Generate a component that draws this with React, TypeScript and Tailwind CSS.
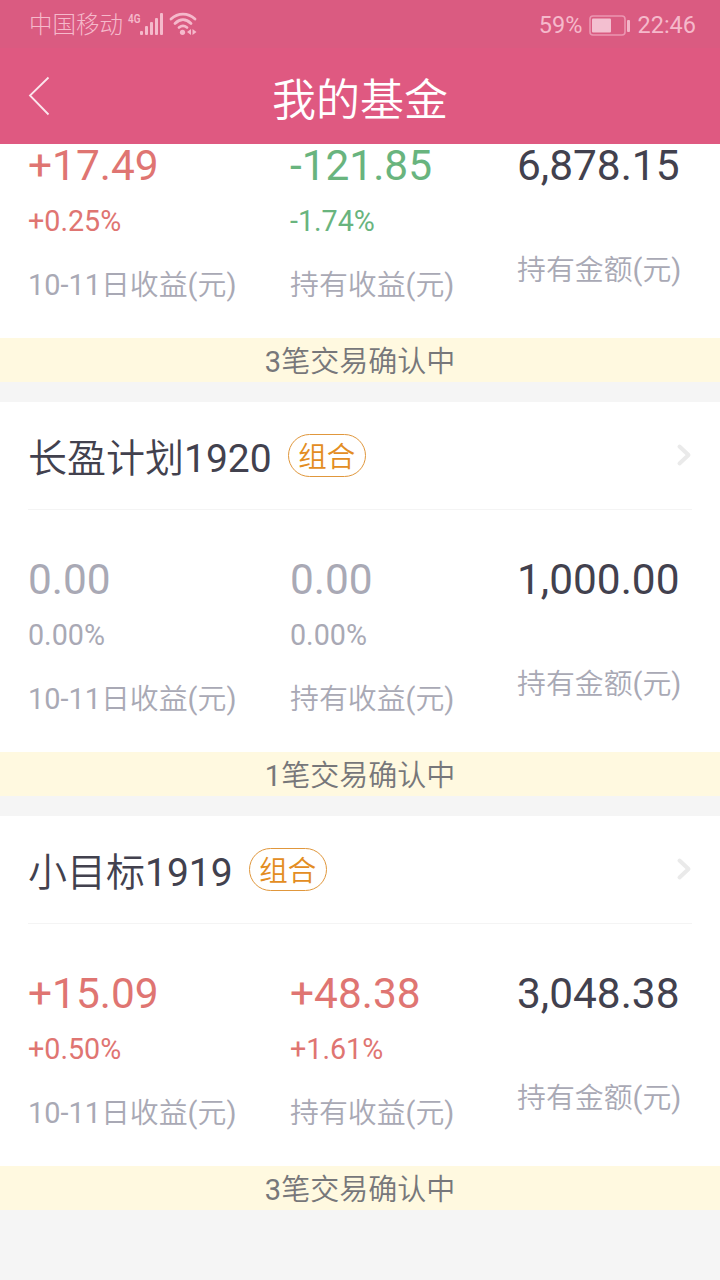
import clsx from "clsx";

type Tone = "up" | "down" | "flat";

type Metric = {
  value: string;
  percent: string;
  label: string;
  tone: Tone;
};

type Fund = {
  name?: string;
  metrics: Metric[];
  total: string;
  pending: string;
};

const toneClass: Record<Tone, string> = {
  up: "text-[#df7572]",
  down: "text-[#69b47e]",
  flat: "text-[#a9a9b5]",
};

const funds: Fund[] = [
  {
    metrics: [
      { value: "+17.49", percent: "+0.25%", label: "10-11日收益(元)", tone: "up" },
      { value: "-121.85", percent: "-1.74%", label: "持有收益(元)", tone: "down" },
    ],
    total: "6,878.15",
    pending: "3笔交易确认中",
  },
  {
    name: "长盈计划1920",
    metrics: [
      { value: "0.00", percent: "0.00%", label: "10-11日收益(元)", tone: "flat" },
      { value: "0.00", percent: "0.00%", label: "持有收益(元)", tone: "flat" },
    ],
    total: "1,000.00",
    pending: "1笔交易确认中",
  },
  {
    name: "小目标1919",
    metrics: [
      { value: "+15.09", percent: "+0.50%", label: "10-11日收益(元)", tone: "up" },
      { value: "+48.38", percent: "+1.61%", label: "持有收益(元)", tone: "up" },
    ],
    total: "3,048.38",
    pending: "3笔交易确认中",
  },
];

/** Sets Chinese characters in the demi-light weight and leaves digits regular. */
function MixedText({ text }: { text: string }) {
  return text
    .split(/([\u4e00-\u9fff]+)/)
    .filter(Boolean)
    .map((part, i) => (
      <span key={i} className={/[\u4e00-\u9fff]/.test(part) ? "font-[350]" : "font-normal"}>
        {part}
      </span>
    ));
}

function StatusBar() {
  return (
    <div className="flex h-12 items-center justify-between bg-[#da5b81] pl-[29px] pr-6 text-[23.5px] leading-none text-[#f5b9cb]">
      <div className="flex items-center">
        <span className="w-24 pt-1 font-light">中国移动</span>
        <svg width="76" height="30" viewBox="125 9 76 30" fill="currentColor">
          <text x="128" y="22.5" fontSize="13" fontWeight="600" textLength="12.5" lengthAdjust="spacingAndGlyphs">
            4G
          </text>
          <rect x="140" y="31" width="3" height="4" rx="1" />
          <rect x="145" y="26" width="3" height="9" rx="1" />
          <rect x="150" y="22" width="3" height="13" rx="1" />
          <rect x="155" y="18" width="3" height="17" rx="1" />
          <rect x="160" y="13" width="3" height="22" rx="1" />
          <g fill="none" stroke="currentColor" strokeWidth="2.8" strokeLinecap="round">
            <path d="M171 19C178 12.500 188 12.500 195 19" />
            <path d="M175 23.500C180 18.500 186 18.500 191 23.500" />
            <path d="M179 27.500C181.500 25.500 184.500 25.500 187 27.500" />
          </g>
          <circle cx="182.500" cy="32.300" r="2.600" />
          <path d="M187 32l4-3v6zM192.500 29v6l4-3z" />
        </svg>
      </div>
      <div className="flex items-center pt-[3px]">
        <span>59%</span>
        <svg className="mx-[7px]" width="41" height="22" viewBox="0 0 41 22" fill="none">
          <rect x="1" y="1" width="35" height="19" rx="3" stroke="#eb96b1" strokeWidth="1.600" />
          <rect x="3" y="3.500" width="19" height="14" rx="1" fill="#f3bfd0" />
          <rect x="38" y="5" width="3" height="12" rx="1" fill="#f3b5c8" />
        </svg>
        <span>22:46</span>
      </div>
    </div>
  );
}

function FundCard({ fund }: { fund: Fund }) {
  return (
    <section className="mb-5 bg-white">
      {fund.name && (
        <div className="mx-7 flex h-[108px] items-center border-b border-[#f4f4f4]">
          <h2 className="pt-[7px] text-[39px] text-[#42414e]">
            <MixedText text={fund.name} />
          </h2>
          <span className="ml-4 flex h-[43px] w-[78px] items-center justify-center rounded-full border border-[#e0973c] pt-1.5 text-[28.500px] text-[#e38d22]">
            <MixedText text="组合" />
          </span>
          <svg className="-mr-px mb-0.5 ml-auto" width="18" height="24" viewBox="0 0 18 24" fill="none">
            <path d="M4.500 3.500L13.500 12L4.500 20.500" stroke="#eaeaea" strokeWidth="4" strokeLinecap="round" strokeLinejoin="round" />
          </svg>
        </div>
      )}
      <div className={clsx("flex pl-7", fund.name ? "h-[242px] pt-[42px]" : "-mt-1.5 h-[200px]")}>
        {fund.metrics.map((m, i) => (
          <div key={m.label} className={i === 0 ? "w-[262px]" : "w-[227px]"}>
            <p className={clsx("text-[42.400px] leading-[56px]", toneClass[m.tone])}>{m.value}</p>
            <p className={clsx("text-[28.700px] leading-[55px]", toneClass[m.tone])}>{m.percent}</p>
            <p className="text-[28.900px] leading-[72px] text-[#a9a9b5]">
              <MixedText text={m.label} />
            </p>
          </div>
        ))}
        <div>
          <p className="text-[42.400px] leading-[56px] text-[#42414e]">{fund.total}</p>
          <p className="mt-[41px] text-[28.900px] leading-[71px] text-[#a9a9b5]">
            <MixedText text="持有金额(元)" />
          </p>
        </div>
      </div>
      <p className="h-11 bg-[#fff9e0] text-center text-[29px] leading-[49px] text-[#77777a]">
        <MixedText text={fund.pending} />
      </p>
    </section>
  );
}

export default function App() {
  return (
    <main className="h-[1280px] w-[720px] overflow-hidden bg-[#f5f5f5] font-['Roboto','Noto_Sans_CJK_SC',sans-serif]">
      <StatusBar />
      <header className="relative z-10 flex h-24 items-center justify-center bg-[#df5981] pt-[9px] text-[44px] font-[350] text-white">
        <svg className="absolute left-7 top-7" width="24" height="42" viewBox="0 0 24 42" fill="none">
          <path d="M20.500 1.500L2 19.500L20.500 38.500" stroke="#fbe6ed" strokeWidth="1.800" />
        </svg>
        我的基金
      </header>
      {funds.map((fund, i) => (
        <FundCard key={i} fund={fund} />
      ))}
    </main>
  );
}
